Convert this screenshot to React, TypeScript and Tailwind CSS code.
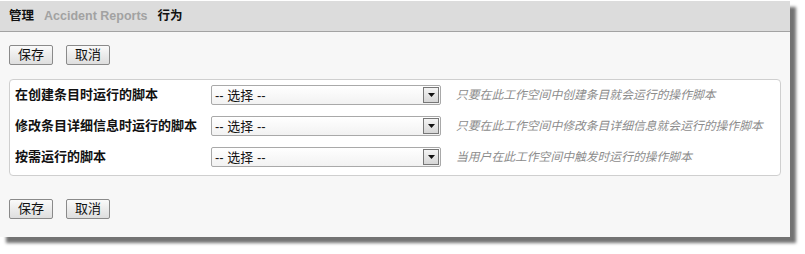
const rows = [
  { label: '在创建条目时运行的脚本', hint: '只要在此工作空间中创建条目就会运行的操作脚本' },
  { label: '修改条目详细信息时运行的脚本', hint: '只要在此工作空间中修改条目详细信息就会运行的操作脚本' },
  { label: '按需运行的脚本', hint: '当用户在此工作空间中触发时运行的操作脚本' },
];

const font = { fontFamily: '"Liberation Sans", "Noto Sans CJK SC", sans-serif' };

function Btn({ children }: { children: string }) {
  return (
    <button className="h-[20px] w-[44px] rounded-[2px] border border-[#8a8a8a] bg-gradient-to-b from-[#fafafa] to-[#dedede] text-[13px] leading-[18px] text-[#111]">
      {children}
    </button>
  );
}

function Select() {
  return (
    <div className="flex h-[20px] w-[230px] items-center justify-between rounded-[2px] border border-[#a9a9a9] bg-gradient-to-b from-white to-[#f2f2f2] pl-[3px] pr-[1px]">
      <span className="text-[13px] leading-none text-[#111]">-- 选择 --</span>
      <span className="flex h-[16px] w-[16px] items-center justify-center border border-[#777] bg-gradient-to-b from-[#f4f4f4] to-[#d6d6d6]">
        <svg width="7" height="4" viewBox="0 0 7 4">
          <path d="M0 0h7L3.5 4z" fill="#111" />
        </svg>
      </span>
    </div>
  );
}

export default function App() {
  return (
    <div className="h-[254px] w-[805px] bg-white pt-[1px]" style={font}>
      <div className="w-[790px] bg-[#f7f7f7] pb-[18px] shadow-[6px_6px_3px_rgba(0,0,0,0.55)]">
        <div className="flex h-[31px] items-center gap-[10px] border-b border-[#a3a3a3] bg-[#dcdcdc] pl-[9px] text-[12.5px] font-bold">
          <span className="text-[#111]">管理</span>
          <span className="text-[#a2a2a2]">Accident Reports</span>
          <span className="text-[#111]">行为</span>
        </div>
        <div className="flex gap-[13px] pl-[9px] pt-[13px]">
          <Btn>保存</Btn>
          <Btn>取消</Btn>
        </div>
        <div className="ml-[9px] mt-[14px] flex w-[772px] flex-col gap-[11px] rounded-[4px] border border-[#cfcfcf] bg-white pb-[8px] pl-[5px] pt-[5px]">
          {rows.map((r) => (
            <div key={r.label} className="flex h-[20px] items-start">
              <div className="w-[196px] pt-[2px] text-[13px] font-bold leading-[16px] text-[#111]">{r.label}</div>
              <Select />
              <div className="pl-[15px] pt-[2px] text-[11.8px] italic leading-[16px] text-[#8c8c8c]">{r.hint}</div>
            </div>
          ))}
        </div>
        <div className="flex gap-[13px] pl-[9px] pt-[23px]">
          <Btn>保存</Btn>
          <Btn>取消</Btn>
        </div>
      </div>
    </div>
  );
}
